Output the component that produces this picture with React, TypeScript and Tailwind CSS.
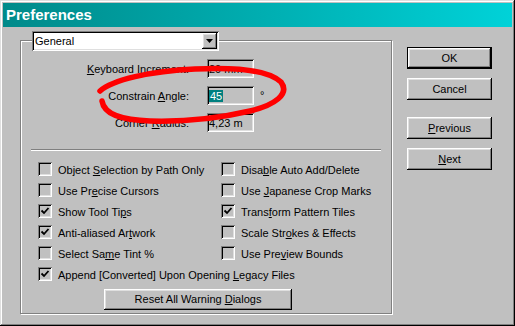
import React from 'react';

// Classic Win9x/2000 bevels
const RAISED = 'shadow-[inset_-1px_-1px_0_#000,inset_1px_1px_0_#fff,inset_-2px_-2px_0_#808080,inset_2px_2px_0_#dfdfdf]';
const SUNKEN = 'shadow-[inset_1px_1px_0_#808080,inset_-1px_-1px_0_#fff,inset_2px_2px_0_#000,inset_-2px_-2px_0_#dfdfdf]';

interface CheckItem {
  pre: string;
  key: string;
  post: string;
  checked: boolean;
}

const LEFT_ITEMS: CheckItem[] = [
  { pre: 'Object ', key: 'S', post: 'election by Path Only', checked: false },
  { pre: 'Use Pr', key: 'e', post: 'cise Cursors', checked: false },
  { pre: 'Show Tool Ti', key: 'p', post: 's', checked: true },
  { pre: 'Anti-aliased Ar', key: 't', post: 'work', checked: true },
  { pre: 'Select Sa', key: 'm', post: 'e Tint %', checked: false },
];

const RIGHT_ITEMS: CheckItem[] = [
  { pre: 'Disa', key: 'b', post: 'le Auto Add/Delete', checked: false },
  { pre: 'Use ', key: 'J', post: 'apanese Crop Marks', checked: false },
  { pre: 'Trans', key: 'f', post: 'orm Pattern Tiles', checked: true },
  { pre: 'Scale Str', key: 'o', post: 'kes & Effects', checked: false },
  { pre: 'Use Pre', key: 'v', post: 'iew Bounds', checked: false },
];

function Checkbox({ checked }: { checked: boolean }) {
  return (
    <div className={`w-[14px] h-[14px] mt-[2px] flex-shrink-0 bg-[#c0c0c0] ${SUNKEN}`}>
      {checked && (
        <svg width="14" height="14" viewBox="0 0 14 14">
          <path d="M3.5 6.5 L6 9 L10.5 4" stroke="#000" strokeWidth="1.8" fill="none" />
        </svg>
      )}
    </div>
  );
}

function CheckRow({ item }: { item: CheckItem }) {
  return (
    <div className="flex items-start h-[21px]">
      <Checkbox checked={item.checked} />
      <span className="ml-[6px] leading-[21px] whitespace-nowrap">
        {item.pre}<u>{item.key}</u>{item.post}
      </span>
    </div>
  );
}

function FieldRow({ label, value, selected, degree }: { label: React.ReactNode; value: string; selected?: boolean; degree?: boolean }) {
  return (
    <div className="flex items-start h-[19px]">
      <div className="w-[168px] text-right leading-[19px] pt-[1px] whitespace-nowrap">{label}</div>
      <div className={`ml-[18px] w-[47px] h-[19px] bg-[#c0c0c0] pl-[2px] leading-[19px] pt-[1px] ${SUNKEN}`}>
        {selected ? <span className="bg-[#008080] text-white px-[1px]">{value}</span> : <span className="whitespace-nowrap">{value}</span>}
      </div>
      {degree && <span className="ml-[6px] leading-[19px]">°</span>}
    </div>
  );
}

function SideButton({ children, isDefault = false, className = '' }: { children: React.ReactNode; isDefault?: boolean; className?: string }) {
  return (
    <div className={`w-[85px] h-[22px] ${isDefault ? 'border border-black' : ''} ${className}`}>
      <div className={`w-full h-full flex items-center justify-center bg-[#c0c0c0] ${RAISED}`}>{children}</div>
    </div>
  );
}

export default function App() {
  return (
    <div
      className="relative w-[515px] h-[326px] bg-[#c0c0c0] p-[3px] text-[11px] text-black shadow-[inset_-1px_-1px_0_#000,inset_1px_1px_0_#dfdfdf,inset_-2px_-2px_0_#808080,inset_2px_2px_0_#fff]"
      style={{ fontFamily: '"Liberation Sans", Arial, sans-serif' }}
    >
      {/* Title bar */}
      <div className="h-[24px] bg-gradient-to-r from-[#008a8a] to-[#00d2d8] flex items-center pl-[3px]">
        <span className="text-white font-bold text-[15px]">Preferences</span>
      </div>

      {/* Body */}
      <div className="flex pl-[17px] pt-[13px]">
        {/* Group box */}
        <div className="w-[372px] border border-[#808080] shadow-[inset_1px_1px_0_#fff,1px_1px_0_#fff] pb-[3px]">
          {/* Category dropdown on the frame */}
          <div className={`ml-[11px] -mt-[10px] w-[187px] h-[20px] bg-white flex items-center pl-[3px] ${SUNKEN}`}>
            <span className="flex-1 leading-[20px]">General</span>
            <div className={`w-[15px] h-[16px] mr-[2px] bg-[#c0c0c0] flex items-center justify-center ${RAISED}`}>
              <svg width="7" height="4" viewBox="0 0 7 4">
                <path d="M0 0 H7 L3.5 4 Z" fill="#000" />
              </svg>
            </div>
          </div>

          {/* Measurement fields */}
          <div className="flex flex-col gap-[8px] mt-[8px]">
            <FieldRow label={<><u>K</u>eyboard Increment:</>} value="20 mm" />
            <FieldRow label={<>Constrain <u>A</u>ngle:</>} value="45" selected degree />
            <FieldRow label={<>Corner <u>R</u>adius:</>} value="4,23 m" />
          </div>

          {/* Separator */}
          <div className="mx-[10px] mt-[17px] h-[2px] border-t border-[#808080] border-b border-b-white" />

          {/* Checkboxes */}
          <div className="mt-[9px] ml-[17px]">
            <div className="grid grid-cols-[183px_1fr]">
              <div className="flex flex-col">
                {LEFT_ITEMS.map((it) => <CheckRow key={it.pre + it.post} item={it} />)}
              </div>
              <div className="flex flex-col">
                {RIGHT_ITEMS.map((it) => <CheckRow key={it.pre + it.post} item={it} />)}
              </div>
            </div>
            <CheckRow item={{ pre: 'Append [Converted] Upon Opening ', key: 'L', post: 'egacy Files', checked: true }} />
          </div>

          {/* Reset button */}
          <div className={`ml-[83px] mt-[3px] w-[188px] h-[21px] flex items-center justify-center ${RAISED}`}>
            <span>Reset All Warning <u>D</u>ialogs</span>
          </div>
        </div>

        {/* Side buttons */}
        <div className="ml-[15px] mt-[7px] flex flex-col">
          <SideButton isDefault>OK</SideButton>
          <SideButton className="mt-[9px]">Cancel</SideButton>
          <SideButton className="mt-[17px]"><span><u>P</u>revious</span></SideButton>
          <SideButton className="mt-[9px]"><span><u>N</u>ext</span></SideButton>
        </div>
      </div>

      {/* Red hand-drawn annotation around Constrain Angle */}
      <svg className="absolute top-0 left-0 pointer-events-none" width="515" height="326" viewBox="0 0 515 326">
        <defs>
          <filter id="soft" x="-10%" y="-10%" width="120%" height="120%">
            <feGaussianBlur stdDeviation="0.6" />
          </filter>
        </defs>
        <path
          d="M100 91 C112 80 150 71 195 69 C235 67 268 70 281 82 C290 94 275 105 250 111 C220 118 185 122 150 121 C120 120 104 114 102 101"
          stroke="#ff0000"
          strokeWidth="5.5"
          strokeLinecap="round"
          fill="none"
          filter="url(#soft)"
        />
      </svg>
    </div>
  );
}
